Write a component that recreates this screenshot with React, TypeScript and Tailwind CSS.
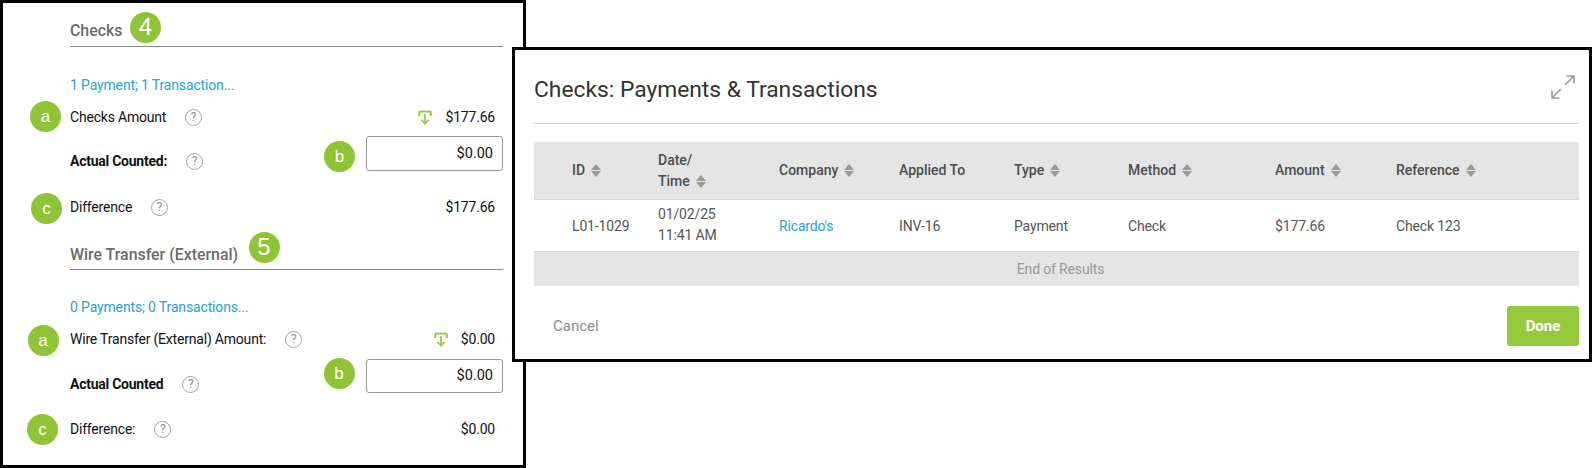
import React from "react";

const font = { fontFamily: "Roboto, sans-serif" };

function Help({ className = "" }: { className?: string }) {
  return (
    <span className={`ml-[19px] flex h-[17px] w-[17px] shrink-0 items-center justify-center rounded-full border border-[#a3a3a3] text-[12px] leading-none font-normal tracking-normal text-[#8f8f8f] ${className}`}>?</span>
  );
}

function Tray() {
  return (
    <svg width="14" height="15" viewBox="0 0 14 15" fill="none" className="mr-[13px] shrink-0">
      <path d="M1.2 6V3C1.2 2 1.8 1.5 2.6 1.5H11.4C12.2 1.5 12.8 2 12.8 3V6" stroke="#9ccb4a" strokeWidth="2.2" />
      <path d="M7 4V13.5M3.4 9.8L7 13.6L10.6 9.8" stroke="#9ccb4a" strokeWidth="1.8" />
    </svg>
  );
}

function Sort() {
  return (
    <svg width="10" height="13" viewBox="0 0 10 13" className="ml-[6px] shrink-0">
      <path d="M5 0L10 6H0Z" fill="#999999" />
      <path d="M5 13L10 7H0Z" fill="#999999" />
    </svg>
  );
}

function Section({ title, link, amountLabel, actualLabel, diffLabel, amount, diff, mt, pb, linkMt, rowMt, labelMt, inputH, diffMt }: {
  title: string; link: string; amountLabel: string; actualLabel: string; diffLabel: string; amount: string; diff: string; mt: string; pb: string; linkMt: string; rowMt: string; labelMt: string; inputH: string; diffMt: string;
}) {
  return (
    <section className={mt}>
      <h2 className={`border-b border-[#8a8a8a] ${pb} text-[15.9px] leading-[24px] font-medium text-[#6b6b6b]`}>{title}</h2>
      <a className={`block ${linkMt} text-[14px] leading-[20px] tracking-[-0.15px] text-[#2a9fd8]`}>{link}</a>
      <div className="mt-[12px] flex h-[20px] items-center justify-between pr-[8px] text-[14px] tracking-[-0.2px] text-[#111111]">
        <div className="flex items-center">{amountLabel}<Help /></div>
        <div className="flex items-center"><Tray />{amount}</div>
      </div>
      <div className={`${rowMt} flex items-start justify-between`}>
        <div className={`${labelMt} flex h-[20px] items-center text-[14px] font-bold tracking-[-0.25px] text-[#111111]`}>{actualLabel}<Help /></div>
        <div className={`flex ${inputH} w-[137px] items-center justify-end rounded-[3px] border border-[#9a9a9a] pr-[9px] text-[14.5px] text-[#111111]`}>$0.00</div>
      </div>
      <div className={`${diffMt} flex h-[20px] items-center justify-between pr-[8px] text-[14px] tracking-[-0.2px] text-[#111111]`}>
        <div className="flex items-center">{diffLabel}<Help /></div>
        <div>{diff}</div>
      </div>
    </section>
  );
}

const badges = [
  { t: "4", x: 145.5, y: 27, big: true },
  { t: "a", x: 45.5, y: 116 },
  { t: "b", x: 339.5, y: 156 },
  { t: "c", x: 46.5, y: 208 },
  { t: "5", x: 264, y: 247, big: true },
  { t: "a", x: 43, y: 340 },
  { t: "b", x: 339, y: 373 },
  { t: "c", x: 42.5, y: 429 },
];

const heads: { label: string; w: string; sort: boolean }[] = [
  { label: "ID", w: "w-[86px]", sort: true },
  { label: "Date/", w: "w-[121px]", sort: false },
  { label: "Company", w: "w-[120px]", sort: true },
  { label: "Applied To", w: "w-[115px]", sort: false },
  { label: "Type", w: "w-[114px]", sort: true },
  { label: "Method", w: "w-[147px]", sort: true },
  { label: "Amount", w: "w-[121px]", sort: true },
  { label: "Reference", w: "w-[120px]", sort: true },
];

export default function App() {
  return (
    <div className="relative h-[468px] w-[1593px] overflow-hidden bg-white" style={font}>
      <div className="h-[468px] w-[526px] border-[3px] border-black pt-[16px] pr-[20px] pl-[67px]">
        <Section title="Checks" link="1 Payment; 1 Transaction..." amountLabel="Checks Amount" actualLabel="Actual Counted:" diffLabel="Difference" amount="$177.66" diff="$177.66" mt="" pb="pb-[3px]" linkMt="mt-[28px]" rowMt="mt-[9px]" labelMt="mt-[15px]" inputH="h-[35px]" diffMt="mt-[26px]" />
        <Section title="Wire Transfer (External)" link="0 Payments; 0 Transactions..." amountLabel="Wire Transfer (External) Amount:" actualLabel="Actual Counted" diffLabel="Difference:" amount="$0.00" diff="$0.00" mt="mt-[26px]" pb="pb-[2px]" linkMt="mt-[27px]" rowMt="mt-[10px]" labelMt="mt-[15px]" inputH="h-[34px]" diffMt="mt-[25px]" />
      </div>

      {badges.map((b, i) => (
        <div key={i} className={`absolute flex h-[31px] w-[31px] items-center justify-center rounded-full bg-[#8fc436] leading-none text-white ${b.big ? "text-[24px]" : "text-[17px]"}`} style={{ left: b.x - 15.5, top: b.y - 15.5, fontFamily: "'Liberation Sans', sans-serif" }}>{b.t}</div>
      ))}

      <div className="absolute top-[47px] left-[512px] flex h-[315px] w-[1080px] flex-col border-[3px] border-black bg-white pr-[10px] pl-[19px]">
        <div className="flex h-[74px] items-center justify-between border-b border-[#cfcfcf] pt-[6px]">
          <h1 className="text-[22.8px] leading-[30px] font-normal text-[#333333]">Checks: Payments &amp; Transactions</h1>
          <svg width="24" height="24" viewBox="0 0 24 24" fill="none" stroke="#999999" strokeWidth="1.6" className="mr-[4px] mb-[5px]">
            <path d="M14 10L23 1M15.5 1H23V8.5" />
            <path d="M10 14L1 23M1 15.5V23H8.5" />
          </svg>
        </div>

        <div className="mt-[18px] flex h-[58px] border-b border-[#d5d5d5] bg-[#e4e4e4] pl-[38px] text-[14px] font-medium text-[#4d4d4d]">
          {heads.map((h, i) => (
            <div key={i} className={`flex ${h.w} shrink-0 flex-col justify-center`}>
              {i === 1 ? (
                <>
                  <div className="leading-[21px]">Date/</div>
                  <div className="flex items-center leading-[21px]">Time<Sort /></div>
                </>
              ) : (
                <div className="flex items-center leading-[21px]">{h.label}{h.sort && <Sort />}</div>
              )}
            </div>
          ))}
        </div>

        <div className="flex h-[52px] items-center border-b border-[#d9d9d9] pt-[1px] pl-[38px] text-[14px] tracking-[-0.15px] text-[#555555]">
          <div className="w-[86px]">L01-1029</div>
          <div className="mb-[2px] w-[121px] leading-[21px]">01/02/25<br />11:41 AM</div>
          <div className="w-[120px] text-[#2a9fd8]">Ricardo's</div>
          <div className="w-[115px]">INV-16</div>
          <div className="w-[114px]">Payment</div>
          <div className="w-[147px]">Check</div>
          <div className="w-[121px]">$177.66</div>
          <div className="w-[120px]">Check 123</div>
        </div>

        <div className="flex h-[34px] items-center justify-center bg-[#e4e4e4] pl-[8px] text-[14px] tracking-[-0.15px] text-[#999999]">End of Results</div>

        <div className="mt-[20px] flex items-center justify-between pl-[19px]">
          <span className="text-[15px] text-[#8c8c8c]">Cancel</span>
          <button className="h-[40px] w-[72px] rounded-[3px] bg-[#97c93d] text-[15px] font-bold text-white">Done</button>
        </div>
      </div>
    </div>
  );
}
